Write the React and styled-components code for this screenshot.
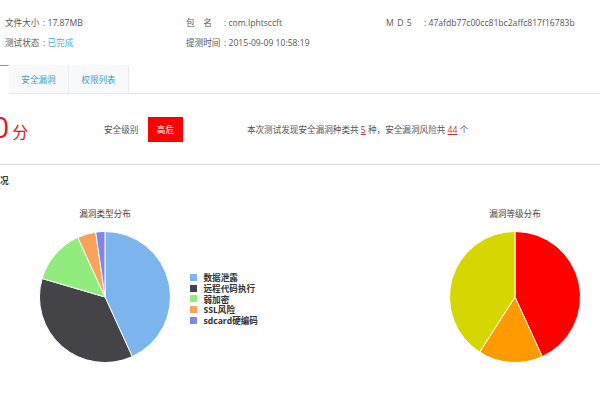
import React from 'react';
import styled, { createGlobalStyle } from 'styled-components';

const GlobalStyle = createGlobalStyle`
  body {
    margin: 0;
    background: #fff;
    font-family: "Open Sans", "Noto Sans CJK SC", sans-serif;
  }
`;

const Page = styled.div`
  width: 600px;
  height: 400px;
  overflow: hidden;
  font-size: 8.6px;
  color: #555;
`;

const InfoGrid = styled.div`
  display: grid;
  grid-template-columns: 181px 200px 1fr;
  padding: 13px 0 0 5px;
  line-height: 20px;
  white-space: nowrap;
`;

const Label = styled.span`
  display: inline-block;
  width: 38px;
  letter-spacing: ${(p) => p.$spread || 'normal'};
`;

const Status = styled.span`
  color: #45b0dc;
`;

const TabBar = styled.div`
  display: flex;
  margin-top: 12px;
  height: 28px;
  border-bottom: 1px solid #e6e6e6;
`;

const Tab = styled.div`
  box-sizing: border-box;
  width: ${(p) => (p.$active ? '9px' : '60px')};
  height: ${(p) => (p.$active ? '29px' : '28px')};
  line-height: 28px;
  text-align: center;
  color: #3e9fcb;
  background: ${(p) => (p.$active ? '#fff' : '#f7f9fa')};
  border-top: 1px solid ${(p) => (p.$active ? '#4aa8e0' : '#f7f9fa')};
  border-right: 1px solid ${(p) => (p.$active ? '#fff' : '#ebebeb')};
`;

const ScoreRow = styled.div`
  display: flex;
  align-items: center;
  height: 70px;
  border-bottom: 1px solid #dedede;
  white-space: nowrap;
`;

const Score = styled.div`
  width: 112px;
  margin-left: -8px;
  flex-shrink: 0;
  color: #e4161c;
  font-size: 30px;
  line-height: 30px;
  span {
    font-size: 16px;
    margin-left: 3px;
  }
`;

const LevelLabel = styled.span`
  margin-right: 9.5px;
`;

const Badge = styled.div`
  width: 35px;
  height: 25px;
  display: flex;
  align-items: center;
  justify-content: center;
  background: #fe0000;
  color: #fff;
`;

const Summary = styled.div`
  margin-left: 64px;
`;

const Count = styled.span`
  color: #c9302c;
  text-decoration: underline;
`;

const SectionTitle = styled.div`
  margin-top: 10px;
  line-height: 12px;
  font-weight: bold;
  color: #333;
`;

const ChartsRow = styled.div`
  display: flex;
  align-items: flex-start;
  margin-top: 21px;
`;

const ChartBlock = styled.div`
  display: grid;
  grid-template-columns: 132px auto;
  column-gap: 19px;
  margin-left: ${(p) => p.$left || 'auto'};
  margin-right: ${(p) => p.$right || '0'};
`;

const ChartTitle = styled.div`
  grid-column: 1;
  text-align: center;
  line-height: 12px;
  margin-bottom: 11px;
  color: #444;
`;

const Legend = styled.ul`
  grid-column: 2;
  grid-row: 2;
  align-self: center;
  list-style: none;
  margin: 4px 0 0;
  padding: 0;
`;

const LegendItem = styled.li`
  display: flex;
  align-items: center;
  height: 10.8px;
  font-weight: bold;
  color: #333;
  white-space: nowrap;
  &::before {
    content: '';
    width: 7px;
    height: 7px;
    margin-right: 6.5px;
    background: ${(p) => p.$color};
  }
`;

const PieSvg = styled.svg`
  grid-column: 1;
  grid-row: 2;
  display: block;
`;

function Pie({ data }) {
  const cx = 66;
  const cy = 66;
  const r = 65.5;
  const total = data.reduce((s, d) => s + d.value, 0);
  let a = 0;
  return (
    <PieSvg width="132" height="132" viewBox="0 0 132 132">
      {data.map((d) => {
        const a0 = a;
        a += (d.value / total) * Math.PI * 2;
        const x0 = cx + r * Math.sin(a0);
        const y0 = cy - r * Math.cos(a0);
        const x1 = cx + r * Math.sin(a);
        const y1 = cy - r * Math.cos(a);
        const large = a - a0 > Math.PI ? 1 : 0;
        return (
          <path
            key={d.name}
            d={`M${cx} ${cy} L${x0} ${y0} A${r} ${r} 0 ${large} 1 ${x1} ${y1} Z`}
            fill={d.color}
            stroke="#fff"
            strokeWidth="1"
            strokeLinejoin="round"
          />
        );
      })}
    </PieSvg>
  );
}

const typeData = [
  { name: '数据泄露', value: 19, color: '#7cb5ec' },
  { name: '远程代码执行', value: 16, color: '#434348' },
  { name: '弱加密', value: 6, color: '#90ed7d' },
  { name: 'SSL风险', value: 2, color: '#f7a35c' },
  { name: 'sdcard硬编码', value: 1, color: '#8085e9' },
];

const levelData = [
  { name: '高危', value: 19, color: '#ff0000' },
  { name: '中危', value: 7, color: '#ff9900' },
  { name: '低危', value: 18, color: '#d6d600' },
];

function App() {
  return (
    <Page>
      <GlobalStyle />
      <InfoGrid>
        <div><Label>文件大小</Label>: 17.87MB</div>
        <div><Label>包　名　</Label>: com.lphtsccft</div>
        <div><Label $spread="0.6px">M D 5</Label>: 47afdb77c00cc81bc2affc817f16783b</div>
        <div><Label>测试状态</Label>: <Status>已完成</Status></div>
        <div><Label>提测时间</Label>: 2015-09-09 10:58:19</div>
      </InfoGrid>

      <TabBar>
        <Tab $active />
        <Tab>安全漏洞</Tab>
        <Tab>权限列表</Tab>
      </TabBar>

      <ScoreRow>
        <Score>0<span>分</span></Score>
        <LevelLabel>安全级别</LevelLabel>
        <Badge>高危</Badge>
        <Summary>
          本次测试发现安全漏洞种类共 <Count>5</Count> 种，安全漏洞风险共 <Count>44</Count> 个
        </Summary>
      </ScoreRow>

      <SectionTitle>况</SectionTitle>

      <ChartsRow>
        <ChartBlock $left="39px">
          <ChartTitle>漏洞类型分布</ChartTitle>
          <Pie data={typeData} />
          <Legend>
            {typeData.map((d) => (
              <LegendItem key={d.name} $color={d.color}>{d.name}</LegendItem>
            ))}
          </Legend>
        </ChartBlock>
        <ChartBlock $right="0">
          <ChartTitle>漏洞等级分布</ChartTitle>
          <Pie data={levelData} />
        </ChartBlock>
      </ChartsRow>
    </Page>
  );
}

export default App;
